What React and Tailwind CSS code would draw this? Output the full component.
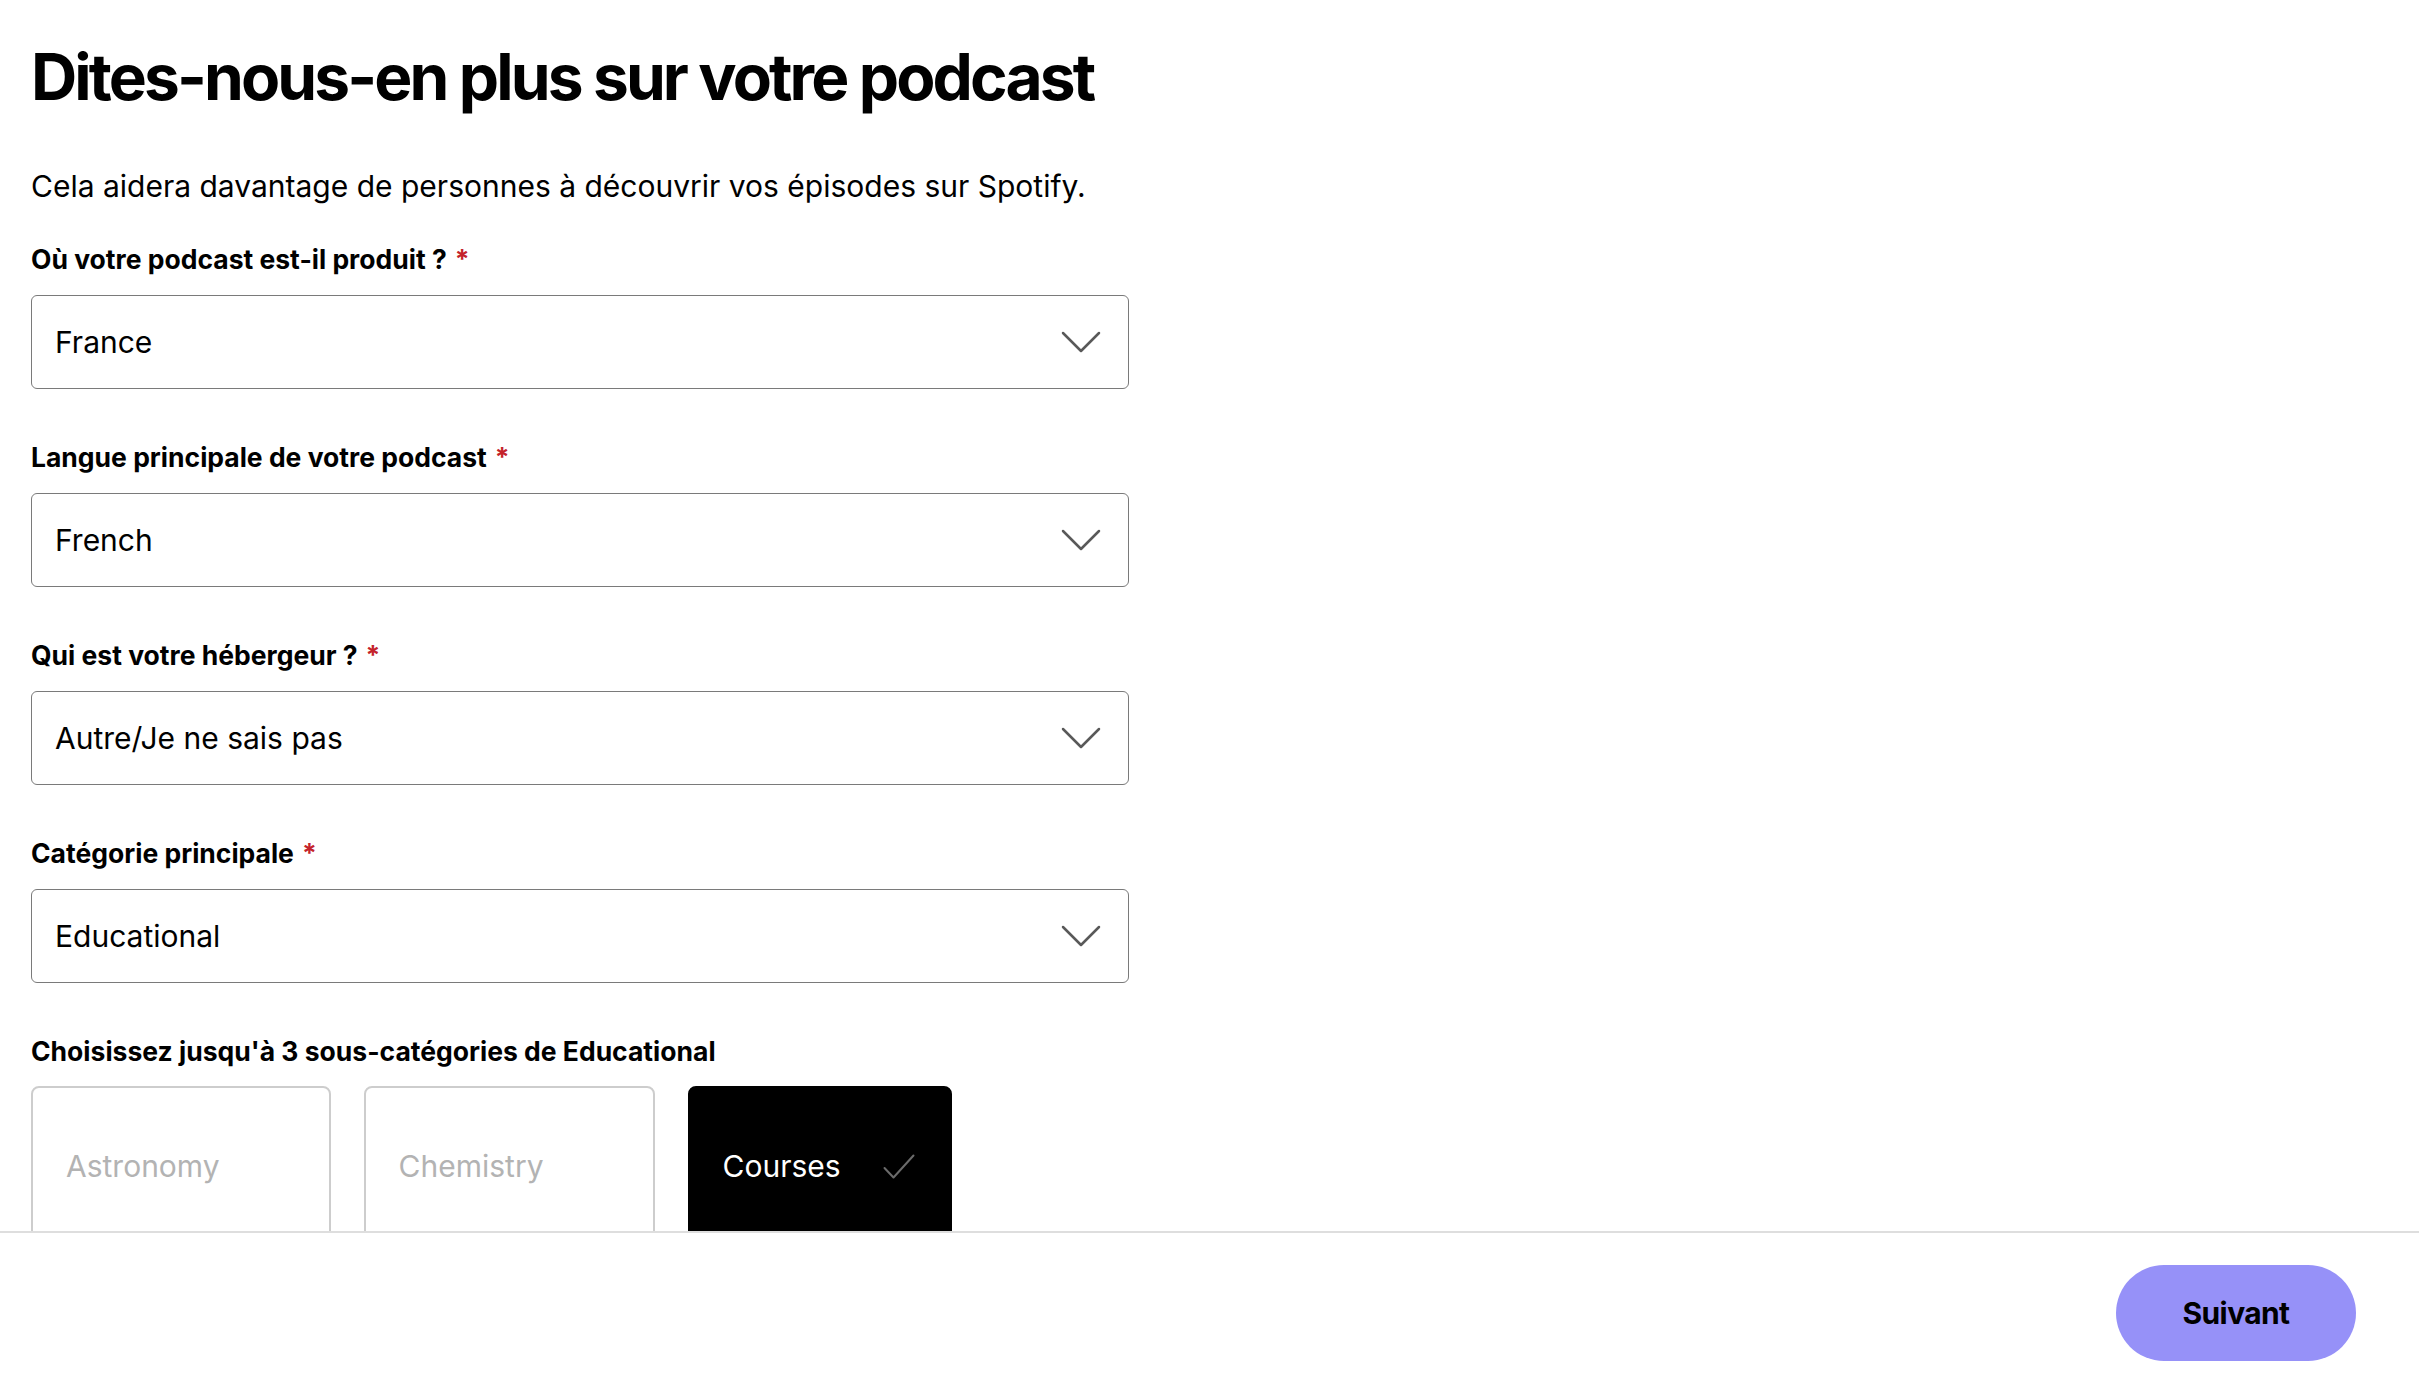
import React from 'react';

const fields = [
  { label: 'Où votre podcast est-il produit ?', value: 'France' },
  { label: 'Langue principale de votre podcast', value: 'French' },
  { label: 'Qui est votre hébergeur ?', value: 'Autre/Je ne sais pas' },
  { label: 'Catégorie principale', value: 'Educational' },
];

const subcategories = [
  { name: 'Astronomy', selected: false },
  { name: 'Chemistry', selected: false },
  { name: 'Courses', selected: true },
];

const Chevron = () => (
  <svg width="40" height="24" viewBox="0 0 40 24" fill="none" className="shrink-0">
    <path d="M2 3 L20 21 L38 3" stroke="#595959" strokeWidth="2.5" strokeLinecap="round" strokeLinejoin="round" />
  </svg>
);

const Check = ({ visible }) => (
  <svg width="32" height="25" viewBox="0 0 32 25" fill="none" className={`shrink-0 ${visible ? '' : 'invisible'}`}>
    <path d="M1.5 14 L10.5 23.5 L30.5 1.5" stroke="#6b6b6b" strokeWidth="2" strokeLinecap="round" strokeLinejoin="round" />
  </svg>
);

const Label = ({ children, required }) => (
  <div className="text-[26.5px] leading-[30px] font-bold text-black">
    {children}
    {required && <span className="ml-[8px] text-[#c4232b]">*</span>}
  </div>
);

export default function App() {
  return (
    <div
      className="h-[1393px] flex flex-col bg-white text-black"
      style={{ fontFamily: 'Inter, "Noto Sans", sans-serif' }}
    >
      {/* Form */}
      <main className="flex-1 min-h-0 overflow-hidden px-[31px] pt-[45px]">
        <h1 className="text-[64px] leading-[64px] font-bold tracking-[-0.045em]">
          Dites-nous-en plus sur votre podcast
        </h1>
        <p className="mt-[59px] text-[30px] leading-[36px]">
          Cela aidera davantage de personnes à découvrir vos épisodes sur Spotify.
        </p>

        <div className="mt-[40px] w-[1098px] flex flex-col gap-[53px]">
          {fields.map((f) => (
            <div key={f.label} className="flex flex-col gap-[21px]">
              <Label required>{f.label}</Label>
              <div className="h-[94px] flex items-center justify-between rounded-md border border-[#7a7a7a] pl-[23px] pr-[27px]">
                <span className="text-[30px]">{f.value}</span>
                <Chevron />
              </div>
            </div>
          ))}

          <div className="flex flex-col gap-[20px]">
            <Label>Choisissez jusqu'à 3 sous-catégories de Educational</Label>
            <div className="flex gap-[33px]">
              {subcategories.map((s) => (
                <div
                  key={s.name}
                  className={`h-[160px] flex items-center gap-[42px] rounded-lg pl-[33px] pr-[35px] ${
                    s.selected
                      ? 'bg-black text-white border-2 border-black'
                      : 'bg-white text-[#b3b3b3] border-2 border-[#cdcdcd]'
                  }`}
                >
                  <span className="text-[30px]">{s.name}</span>
                  <Check visible={s.selected} />
                </div>
              ))}
            </div>
          </div>
        </div>
      </main>

      {/* Footer */}
      <footer className="h-[162px] shrink-0 border-t-2 border-[#dedede] bg-white flex items-center justify-end pr-[63px]">
        <button className="w-[240px] h-[96px] rounded-full bg-[#9691f8] text-[30px] font-bold tracking-[-0.02em] text-black">
          Suivant
        </button>
      </footer>
    </div>
  );
}
